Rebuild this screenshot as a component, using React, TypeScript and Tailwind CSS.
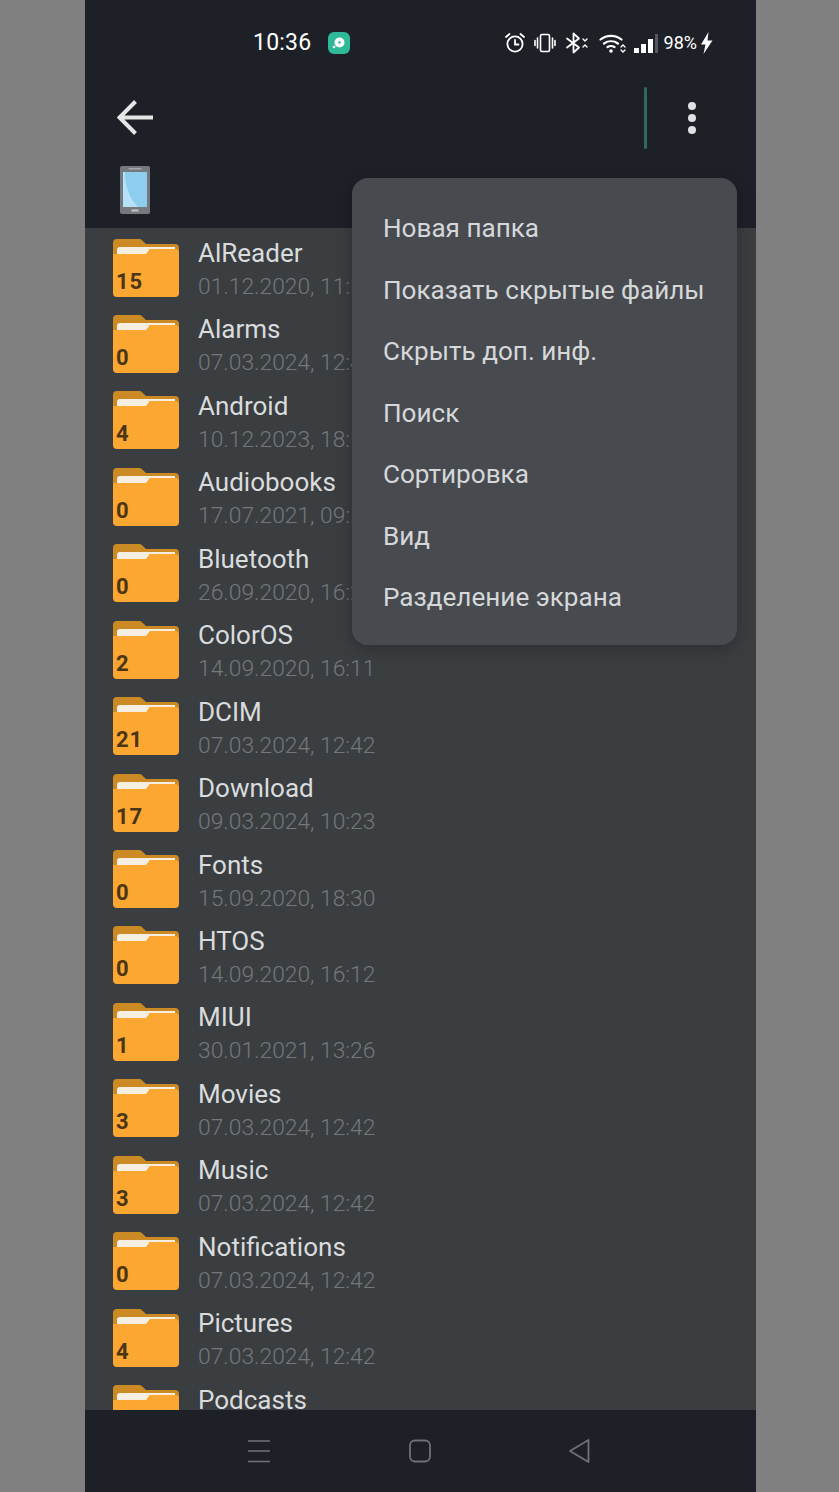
const folders = [
  { name: 'AlReader', date: '01.12.2020, 11:17', count: 15 },
  { name: 'Alarms', date: '07.03.2024, 12:42', count: 0 },
  { name: 'Android', date: '10.12.2023, 18:15', count: 4 },
  { name: 'Audiobooks', date: '17.07.2021, 09:14', count: 0 },
  { name: 'Bluetooth', date: '26.09.2020, 16:20', count: 0 },
  { name: 'ColorOS', date: '14.09.2020, 16:11', count: 2 },
  { name: 'DCIM', date: '07.03.2024, 12:42', count: 21 },
  { name: 'Download', date: '09.03.2024, 10:23', count: 17 },
  { name: 'Fonts', date: '15.09.2020, 18:30', count: 0 },
  { name: 'HTOS', date: '14.09.2020, 16:12', count: 0 },
  { name: 'MIUI', date: '30.01.2021, 13:26', count: 1 },
  { name: 'Movies', date: '07.03.2024, 12:42', count: 3 },
  { name: 'Music', date: '07.03.2024, 12:42', count: 3 },
  { name: 'Notifications', date: '07.03.2024, 12:42', count: 0 },
  { name: 'Pictures', date: '07.03.2024, 12:42', count: 4 },
  { name: 'Podcasts' },
];

const menuItems = [
  'Новая папка',
  'Показать скрытые файлы',
  'Скрыть доп. инф.',
  'Поиск',
  'Сортировка',
  'Вид',
  'Разделение экрана',
];

function FolderIcon({ count }: { count?: number }) {
  return (
    <div className="relative w-[66px] h-[58px] shrink-0">
      <svg width="66" height="58" viewBox="0 0 66 58" className="block">
        <path d="M0 4a4 4 0 0 1 4-4h22a4 4 0 0 1 3 1.200L33 5h29a4 4 0 0 1 4 4v14H0z" fill="#cb8a24" />
        <path d="M4 11a3 3 0 0 1 3-3h55v2H37l-3 5H4z" fill="#f6eee0" />
        <path d="M0 15h33l4-5h25a4 4 0 0 1 4 4v40a4 4 0 0 1-4 4H4a4 4 0 0 1-4-4z" fill="#fca731" />
      </svg>
      {count !== undefined && (
        <span className="absolute left-[3px] bottom-[2px] text-[22px] leading-[26px] font-bold text-[#4a3516] tracking-[1px]">
          {count}
        </span>
      )}
    </div>
  );
}

function StatusIcons() {
  return (
    <div className="flex items-center ml-auto mr-[43px] text-white">
      <svg width="22" height="22" viewBox="0 0 22 22" fill="none" stroke="white" strokeWidth="1.8" strokeLinecap="round">
        <circle cx="11" cy="12" r="7.600" />
        <path d="M11 8v4.500h3.500M2 5l3.500-3M20 5l-3.500-3" />
      </svg>
      <svg width="22" height="22" viewBox="0 0 22 22" fill="none" stroke="white" strokeWidth="1.6" className="ml-[8px]" strokeLinecap="round">
        <rect x="6.500" y="2.500" width="9" height="17" rx="1.500" />
        <path d="M3.500 6v10M1 8.500v5M18.500 6v10M21 8.500v5" />
      </svg>
      <svg width="24" height="22" viewBox="0 0 24 22" fill="none" stroke="white" strokeWidth="1.8" className="ml-[9px]" strokeLinecap="round" strokeLinejoin="round">
        <path d="M2 6.500l12 9-5.500 5V1.500l5.500 5-12 9" />
        <path d="M18 7l2 2 2-2M18 15l2-2 2 2" strokeWidth="1.4" />
      </svg>
      <svg width="28" height="22" viewBox="0 0 28 22" fill="none" stroke="white" className="ml-[10px]" strokeLinecap="round">
        <path d="M1.500 7.500a17 17 0 0 1 21 0M5 11.500a12 12 0 0 1 14 0M8.500 15a7 7 0 0 1 7 0" strokeWidth="2.200" />
        <circle cx="12" cy="19" r="1.800" fill="white" stroke="none" />
        <path d="M22 15l2-2 2 2M22 18l2 2 2-2" strokeWidth="1.300" />
      </svg>
      <div className="flex items-end gap-[2px] h-[20px] ml-[7px]">
        <div className="w-[5px] h-[5px] bg-white" />
        <div className="w-[5px] h-[9px] bg-white" />
        <div className="w-[5px] h-[14px] bg-white" />
        <div className="w-[3px] h-[19px] bg-[#55585c]" />
      </div>
      <span className="ml-[6px] text-[18px] leading-[22px] text-white">98%</span>
      <svg width="13" height="22" viewBox="0 0 13 22" className="ml-[3px]">
        <path d="M8.500 0L1 12.500h4.500L3.500 22 12.500 8.500H7.500z" fill="white" />
      </svg>
    </div>
  );
}

export default function App() {
  return (
    <div className="w-[839px] h-[1492px] bg-[#808080] pl-[85px] overflow-hidden font-['Roboto',sans-serif]">
      <div className="relative w-[671px] h-full flex flex-col bg-[#3a3e41]">
        <div className="bg-[#1d2027] h-[228px] shrink-0 flex flex-col">
          <div className="h-[85px] flex items-center pl-[168px]">
            <span className="text-[23px] leading-[30px] text-white tracking-[0.2px]">10:36</span>
            <div className="ml-[17px] w-[22px] h-[22px] rounded-[6px] bg-[#2fb998] flex items-center justify-center">
              <svg width="16" height="16" viewBox="0 0 16 16">
                <circle cx="8.500" cy="7.500" r="5" fill="white" />
                <circle cx="8.500" cy="7.500" r="1.300" fill="#2fb998" />
                <circle cx="3" cy="12" r="1.300" fill="white" />
              </svg>
            </div>
            <StatusIcons />
          </div>
          <div className="h-[65px] flex items-center pl-[32px]">
            <svg width="37" height="36" viewBox="0 0 37 36" fill="none" stroke="#e6e6e6" strokeWidth="4">
              <path d="M18.500 1.500L2.500 17.500l16 16M3 17.500h33" />
            </svg>
            <div className="ml-auto w-[3px] h-[62px] rounded-full bg-[#2f6a5c]" />
            <div className="ml-[41px] mr-[60px] flex flex-col gap-[4px]">
              <div className="w-[8px] h-[8px] rounded-full bg-[#e0e1e4]" />
              <div className="w-[8px] h-[8px] rounded-full bg-[#e0e1e4]" />
              <div className="w-[8px] h-[8px] rounded-full bg-[#e0e1e4]" />
            </div>
          </div>
          <div className="pl-[35px] pt-[16px]">
            <svg width="30" height="49" viewBox="0 0 30 49">
              <rect x="0" y="0" width="30" height="48" rx="2" fill="#75787c" />
              <rect x="8.500" y="2" width="13" height="1.500" fill="#a5a8ab" />
              <rect x="3" y="6" width="24" height="35" fill="#8dcdee" />
              <path d="M3 6h2c0 14 4 26 13 35H3z" fill="#b5e2f8" />
              <rect x="11.500" y="43.500" width="7" height="2" fill="#c4c6c8" />
            </svg>
          </div>
        </div>

        <div className="flex-1 overflow-hidden pl-[28px] pt-[10.5px]">
          {folders.map((f) => (
            <div key={f.name} className="flex h-[76.45px]">
              <FolderIcon count={f.count} />
              <div className="ml-[19px] flex flex-col -mt-[1.5px]">
                <span className="text-[26px] leading-[32px] text-[#d9dbdc]">{f.name}</span>
                {f.date && (
                  <span className="text-[22.8px] leading-[30px] mt-[3px] text-[#74787b] font-light">{f.date}</span>
                )}
              </div>
            </div>
          ))}
        </div>

        <div className="bg-[#1d2027] h-[82px] shrink-0 flex items-center justify-center gap-[139px] pr-[3px]">
          <svg width="22" height="24" viewBox="0 0 22 24" stroke="#6f7276" strokeWidth="1.6">
            <path d="M0 2h22M0 12h22M0 22.500h22" />
          </svg>
          <svg width="22" height="24" viewBox="0 0 22 24" fill="none" stroke="#6f7276" strokeWidth="1.800">
            <rect x="1" y="1.500" width="20" height="21" rx="5" />
          </svg>
          <svg width="22" height="26" viewBox="0 0 22 26" fill="none" stroke="#6f7276" strokeWidth="1.800" strokeLinejoin="round" className="-ml-[2px]">
            <path d="M20.500 2L2 13l18.500 11z" />
          </svg>
        </div>

        <div className="absolute left-[267px] top-[178px] w-[385px] h-[467px] rounded-[16px] bg-[#474b50] shadow-[0_4px_16px_rgba(0,0,0,0.25)] pt-[20px] pl-[31px]">
          {menuItems.map((item) => (
            <div key={item} className="h-[61.5px] flex items-center text-[26.1px] text-[#d5d7d9] whitespace-nowrap">
              {item}
            </div>
          ))}
        </div>
      </div>
    </div>
  );
}
